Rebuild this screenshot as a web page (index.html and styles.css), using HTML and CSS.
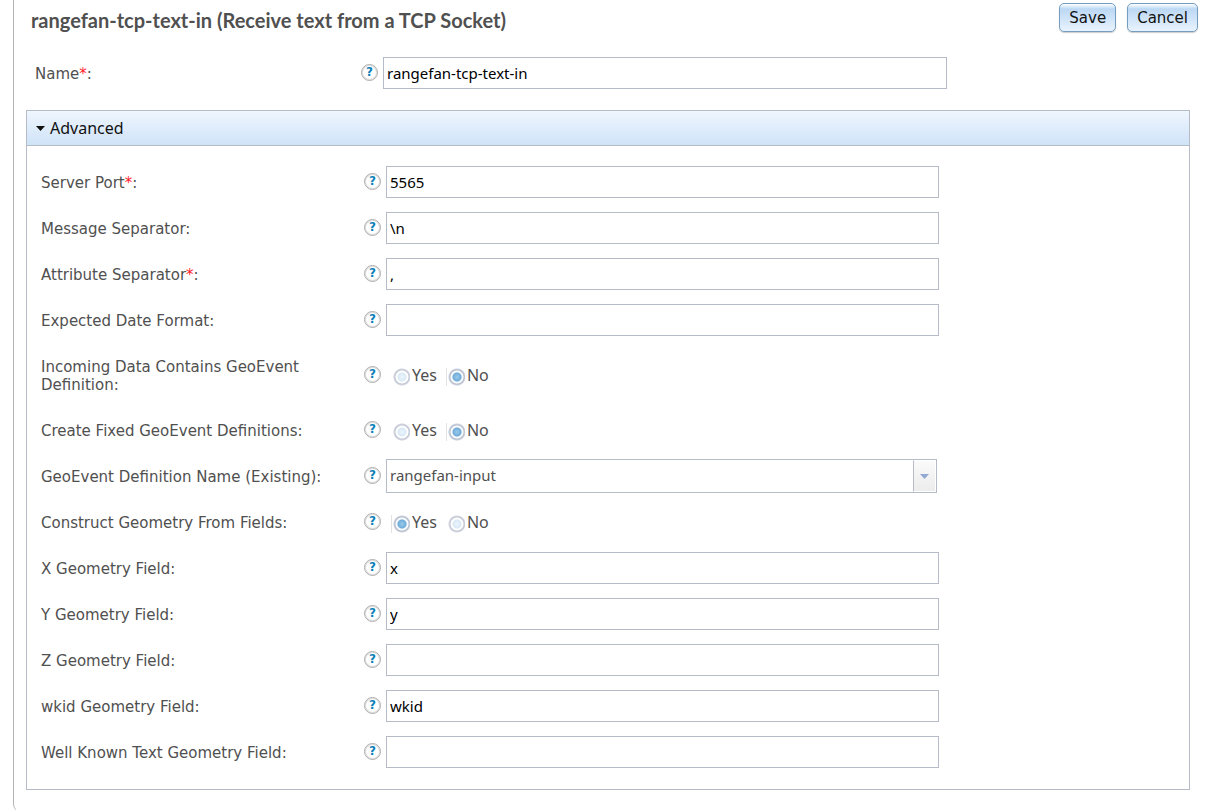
FILE: index.html
```html
<!DOCTYPE html>
<html lang="en">
<head>
<meta charset="utf-8">
<title>rangefan-tcp-text-in</title>
<link rel="stylesheet" href="styles.css">
</head>
<body>
<form class="frame">
  <header class="header">
    <h1 class="title">rangefan-tcp-text-in (Receive text from a TCP Socket)</h1>
    <div class="actions">
      <button class="btn" type="button">Save</button>
      <button class="btn" type="button">Cancel</button>
    </div>
  </header>

  <div class="row name-row">
    <label class="label" for="name">Name<span class="req">*</span>:</label>
    <button class="help" type="button">?</button>
    <input class="text" id="name" type="text" value="rangefan-tcp-text-in">
  </div>

  <section class="panel">
    <h2 class="panel-head"><button class="toggle" type="button" aria-expanded="true"><svg class="caret" width="9" height="5" viewBox="0 0 9 5"><path d="M0 0h9L4.500 5z" fill="#111"/></svg>Advanced</button></h2>
    <div class="panel-body">
      <div class="row">
        <label class="label" for="port">Server Port<span class="req">*</span>:</label>
        <button class="help" type="button">?</button>
        <input class="text" id="port" type="text" value="5565">
      </div>
      <div class="row">
        <label class="label" for="msgsep">Message Separator:</label>
        <button class="help" type="button">?</button>
        <input class="text" id="msgsep" type="text" value="\n">
      </div>
      <div class="row">
        <label class="label" for="attrsep">Attribute Separator<span class="req">*</span>:</label>
        <button class="help" type="button">?</button>
        <input class="text" id="attrsep" type="text" value=",">
      </div>
      <div class="row">
        <label class="label" for="datefmt">Expected Date Format:</label>
        <button class="help" type="button">?</button>
        <input class="text" id="datefmt" type="text">
      </div>
      <div class="row" role="radiogroup" aria-labelledby="incoming">
        <span class="label" id="incoming">Incoming Data Contains GeoEvent Definition:</span>
        <button class="help" type="button">?</button>
        <div class="radios">
          <label class="option"><input class="radio" type="radio" name="incoming">Yes</label>
          <label class="option"><input class="radio" type="radio" name="incoming" checked>No</label>
        </div>
      </div>
      <div class="row" role="radiogroup" aria-labelledby="fixed">
        <span class="label" id="fixed">Create Fixed GeoEvent Definitions:</span>
        <button class="help" type="button">?</button>
        <div class="radios">
          <label class="option"><input class="radio" type="radio" name="fixed">Yes</label>
          <label class="option"><input class="radio" type="radio" name="fixed" checked>No</label>
        </div>
      </div>
      <div class="row">
        <label class="label" for="defname">GeoEvent Definition Name (Existing):</label>
        <button class="help" type="button">?</button>
        <div class="combo">
          <select class="select" id="defname"><option>rangefan-input</option></select>
          <span class="combo-arrow"><svg width="9" height="5" viewBox="0 0 9 5"><path d="M0 0h9L4.500 5z" fill="#92a9d3"/></svg></span>
        </div>
      </div>
      <div class="row" role="radiogroup" aria-labelledby="construct">
        <span class="label" id="construct">Construct Geometry From Fields:</span>
        <button class="help" type="button">?</button>
        <div class="radios">
          <label class="option"><input class="radio" type="radio" name="construct" checked>Yes</label>
          <label class="option"><input class="radio" type="radio" name="construct">No</label>
        </div>
      </div>
      <div class="row">
        <label class="label" for="xfield">X Geometry Field:</label>
        <button class="help" type="button">?</button>
        <input class="text" id="xfield" type="text" value="x">
      </div>
      <div class="row">
        <label class="label" for="yfield">Y Geometry Field:</label>
        <button class="help" type="button">?</button>
        <input class="text" id="yfield" type="text" value="y">
      </div>
      <div class="row">
        <label class="label" for="zfield">Z Geometry Field:</label>
        <button class="help" type="button">?</button>
        <input class="text" id="zfield" type="text">
      </div>
      <div class="row">
        <label class="label" for="wkid">wkid Geometry Field:</label>
        <button class="help" type="button">?</button>
        <input class="text" id="wkid" type="text" value="wkid">
      </div>
      <div class="row">
        <label class="label" for="wkt">Well Known Text Geometry Field:</label>
        <button class="help" type="button">?</button>
        <input class="text" id="wkt" type="text">
      </div>
    </div>
  </section>
</form>
</body>
</html>
```
FILE: styles.css
```css
* { box-sizing: border-box; }

body {
  height: 100vh;
  margin: 0;
  overflow: hidden;
  background: #fff;
  color: #505050;
  font: 15px/18px "DejaVu Sans", Verdana, sans-serif;
}

button, input, select { font: inherit; color: inherit; margin: 0; }

.frame {
  min-height: 812px;
  margin-left: 13px;
  padding: 0 12px 20px;
  border-left: 1px solid #b4b4b4;
  border-bottom-left-radius: 8px;
}

.header {
  display: flex;
  justify-content: space-between;
  align-items: flex-start;
  padding: 3px 0 0 5px;
}

.title {
  margin: 0;
  font: bold 20px/35px Lato, sans-serif;
}

.actions { display: flex; gap: 11px; }

.btn {
  height: 29px;
  padding: 0 9px;
  border: 1px solid #759dc0;
  border-radius: 5px;
  background: linear-gradient(#fff 0, #bcd8f4 5px, #e9f3fe 100%);
  box-shadow: 0 1px 1px rgba(0, 0, 0, 0.2);
  color: #111;
}

.row {
  display: grid;
  grid-template-columns: 323fr 22px 553fr 236fr;
  align-items: center;
  padding: 6px 0;
}

.name-row {
  grid-template-columns: 326fr 22px 564fr 243fr;
  padding: 18px 8px 20px 9px;
}

.label { padding: 9px 36px 7px 0; }

.req { color: #ff1a2a; }

.help {
  width: 17px;
  height: 17px;
  margin-bottom: 2px;
  padding: 0;
  border: 1px solid #adadad;
  border-radius: 50%;
  background: #fff;
  box-shadow: inset 0 0 0 1px #dedede;
  color: #0d7fb8;
  font: bold 12px/15px "DejaVu Sans", sans-serif;
}

.text, .select {
  width: 100%;
  height: 32px;
  padding: 0 3px 1px;
  border: 1px solid #b5bcc7;
  border-radius: 0;
  background: #fff;
  color: #000;
  font: 15px/24px "Noto Sans", sans-serif;
}

.panel {
  margin-right: 8px;
  border: 1px solid #b5bcc7;
}

.panel-head {
  margin: 0;
  border-bottom: 1px solid #b5bcc7;
  background: linear-gradient(#eff6fe, #cfe3f8);
  font: 16px/18px "Noto Sans", sans-serif;
}

.toggle {
  display: flex;
  align-items: center;
  gap: 5px;
  width: 100%;
  height: 34px;
  padding: 0 9px;
  border: 0;
  background: none;
  color: #111;
}

.panel-body { padding: 13px 14px 14px; }

.radios {
  display: flex;
  gap: 9px;
  padding: 0 0 1px 5px;
  font: 16px/18px "Noto Sans", sans-serif;
}

.option { display: flex; align-items: center; gap: 2px; }

.radio {
  appearance: none;
  width: 19px;
  height: 18px;
  margin-top: 5px;
  border-left: 1px solid transparent;
  background: radial-gradient(circle at 10px 9px, #edf5fc 0, #d8e9f5 4px, #fff 5px, #fff 6px, #bfc5d4 7px, #d3d7e1 8px, transparent 9px) no-repeat;
}

.radio:checked {
  border-left-color: #e2e2e2;
  background: radial-gradient(circle at 10px 9px, #9bcaec 0, #6facd8 4px, #eef5fb 5px, #fff 6px, #b3bccd 7px, #ccd1dc 8px, transparent 9px) no-repeat;
}

.combo { display: flex; position: relative; margin-right: 2px; }

.select {
  appearance: none;
  height: 34px;
  padding: 0 28px 2px 3px;
  color: #505050;
}

.combo-arrow {
  position: absolute;
  top: 1px;
  right: 1px;
  bottom: 1px;
  display: flex;
  align-items: center;
  justify-content: center;
  width: 23px;
  border: 1px solid #fff;
  border-left: 1px solid #b5bcc7;
  background: linear-gradient(#fafafa, #ececec);
  pointer-events: none;
}
```
